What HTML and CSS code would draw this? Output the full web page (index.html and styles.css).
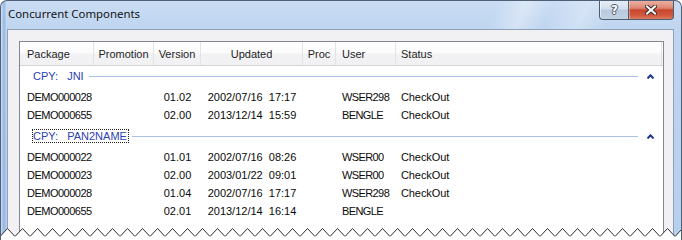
FILE: index.html
```html
<!DOCTYPE html>
<html>
<head>
<meta charset="utf-8">
<link rel="stylesheet" href="styles.css">
</head>
<body>
<div class="window">
  <div class="titlebar">
    <span class="title">Concurrent Components</span>
    <div class="caption">
      <div class="cbtn help"><span class="help-glyph">?</span></div>
      <div class="cbtn close">
        <svg class="x-glyph" width="12" height="10" viewBox="0 0 12 10">
          <path d="M2 1.5 L10 8.5 M10 1.5 L2 8.5" stroke="#3d2a28" stroke-width="4" stroke-linecap="square" fill="none"/>
          <path d="M2 1.5 L10 8.5 M10 1.5 L2 8.5" stroke="#ffffff" stroke-width="2" stroke-linecap="square" fill="none"/>
        </svg>
      </div>
    </div>
  </div>
  <div class="client">
    <div class="list">
      <div class="list-header">
        <div class="hcell left pad7">Package</div>
        <div class="hcell center">Promotion</div>
        <div class="hcell center">Version</div>
        <div class="hcell center">Updated</div>
        <div class="hcell center">Proc</div>
        <div class="hcell left pad6">User</div>
        <div class="hcell left pad5">Status</div>
      </div>

      <div class="group">
        <div class="group-header">
          <span class="group-title">CPY:  JNI</span>
          <span class="group-line"></span>
          <svg class="chevron" width="7" height="5" viewBox="0 0 7 5"><polyline points="0.5,4.5 3.5,1.3 6.5,4.5" fill="none" stroke="#1b3a8e" stroke-width="2"/></svg>
        </div>
        <div class="row">
          <div class="cell pkg">DEMO000028</div><div class="cell"></div><div class="cell center">01.02</div><div class="cell center">2002/07/16  17:17</div><div class="cell"></div><div class="cell user">WSER298</div><div class="cell status">CheckOut</div>
        </div>
        <div class="row">
          <div class="cell pkg">DEMO000655</div><div class="cell"></div><div class="cell center">02.00</div><div class="cell center">2013/12/14  15:59</div><div class="cell"></div><div class="cell user">BENGLE</div><div class="cell status">CheckOut</div>
        </div>
      </div>

      <div class="group second">
        <div class="group-header">
          <span class="group-title focused">CPY:  PAN2NAME</span>
          <span class="group-line"></span>
          <svg class="chevron" width="7" height="5" viewBox="0 0 7 5"><polyline points="0.5,4.5 3.5,1.3 6.5,4.5" fill="none" stroke="#1b3a8e" stroke-width="2"/></svg>
        </div>
        <div class="row">
          <div class="cell pkg">DEMO000022</div><div class="cell"></div><div class="cell center">01.01</div><div class="cell center">2002/07/16  08:26</div><div class="cell"></div><div class="cell user">WSER00</div><div class="cell status">CheckOut</div>
        </div>
        <div class="row">
          <div class="cell pkg">DEMO000023</div><div class="cell"></div><div class="cell center">02.00</div><div class="cell center">2003/01/22  09:01</div><div class="cell"></div><div class="cell user">WSER00</div><div class="cell status">CheckOut</div>
        </div>
        <div class="row">
          <div class="cell pkg">DEMO000028</div><div class="cell"></div><div class="cell center">01.04</div><div class="cell center">2002/07/16  17:17</div><div class="cell"></div><div class="cell user">WSER298</div><div class="cell status">CheckOut</div>
        </div>
        <div class="row">
          <div class="cell pkg">DEMO000655</div><div class="cell"></div><div class="cell center">02.01</div><div class="cell center">2013/12/14  16:14</div><div class="cell"></div><div class="cell user">BENGLE</div><div class="cell status"></div>
        </div>
      </div>
    </div>
  </div>

  <svg class="torn" width="682" height="16" viewBox="0 0 682 16">
    <defs>
      <pattern id="tooth" patternUnits="userSpaceOnUse" width="15" height="16">
        <path d="M0 12.5 L7.5 4.5 L15 12.5 L15 16 L0 16 Z" fill="#ffffff"/>
        <path d="M0 12.5 L7.5 4.5 L15 12.5" fill="none" stroke="#2b2b2b" stroke-width="1"/>
      </pattern>
    </defs>
    <rect x="0" y="0" width="682" height="16" fill="url(#tooth)"/>
  </svg>
</div>
</body>
</html>
```

FILE: styles.css
```css
* {
  box-sizing: border-box;
}

html, body {
  margin: 0;
  padding: 0;
  background: #ffffff;
}

body {
  font-family: "Liberation Sans", Arial, sans-serif;
  font-size: 11px;
  color: #000;
}

.window {
  position: relative;
  width: 682px;
  height: 240px;
  overflow: hidden;
  display: flex;
  flex-direction: column;
  border: 1px solid #4f6178;
  border-bottom: none;
  border-radius: 7px 7px 0 0;
  padding: 0 7px 0 6px;
  background:
    linear-gradient(90deg, rgba(255,255,255,0.35) 0, rgba(255,255,255,0) 1px, rgba(120,160,215,0.0) 1px, rgba(120,160,215,0.45) 2px, rgba(120,160,215,0.45) 4px, rgba(120,160,215,0) 5px),
    linear-gradient(180deg, #c9dcf3 0, #bfd5f0 28px, #b7cfee 100%);
}

.titlebar {
  height: 28px;
  display: flex;
  align-items: flex-start;
  margin: 0 -7px 0 -6px;
  padding: 0 7px 0 6px;
  background: linear-gradient(112deg, rgba(255,255,255,0) 72%, rgba(255,255,255,0.35) 76%, rgba(255,255,255,0) 80%, rgba(255,255,255,0.28) 85%, rgba(255,255,255,0) 89%);
}

.title {
  font-family: "Noto Sans", "Open Sans", sans-serif;
  font-size: 11.4px;
  line-height: 16px;
  padding-top: 5px;
  padding-left: 1px;
  color: #141414;
}

.caption {
  display: flex;
  margin-left: auto;
}

.cbtn {
  height: 19px;
  border: 1px solid #4e5c6e;
  border-top: none;
  display: flex;
  align-items: center;
  justify-content: center;
}

.help {
  width: 29px;
  border-right: none;
  border-radius: 0 0 0 4px;
  background: linear-gradient(180deg, #e6edf6 0, #d3dfee 45%, #b9c9dd 50%, #c3d3e6 100%);
  box-shadow: inset 1px 0 0 rgba(255,255,255,0.6);
}

.help-glyph {
  font-family: "DejaVu Sans", sans-serif;
  font-weight: bold;
  font-size: 12px;
  line-height: 12px;
  color: #ffffff;
  margin-left: 1px;
  text-shadow: 1px 0 0 #4a5666, -1px 0 0 #4a5666, 0 1px 0 #4a5666, 0 -1px 0 #4a5666;
}

.close {
  width: 46px;
  border-radius: 0 0 4px 0;
  background: linear-gradient(180deg, #eab0a2 0, #dc8570 40%, #c9462e 50%, #d1583f 80%, #dd7b62 100%);
  box-shadow: inset 1px 0 0 rgba(255,255,255,0.35);
}

.x-glyph {
  display: block;
  margin-top: -1px;
}

.client {
  flex: 1;
  display: flex;
  flex-direction: column;
  border: 1px solid #8fa1b7;
  border-bottom: none;
  background: #f1f0f3;
  padding: 11px 9px 0 11px;
}

.list {
  flex: 1;
  border: 1px solid #828790;
  border-bottom: none;
  background: #ffffff;
}

.list-header,
.row {
  display: grid;
  grid-template-columns: 74px 60px 47px 102px 33px 60px 266px;
}

.list-header {
  height: 24px;
  border-bottom: 1px solid #d5d5d5;
  background: linear-gradient(180deg, #ffffff 0, #fbfbfc 48%, #f2f2f4 52%, #f1f1f3 100%);
}

.hcell {
  border-right: 1px solid #e3e3e6;
  padding-top: 2px;
  line-height: 21px;
  color: #1e1e1e;
  white-space: pre;
  overflow: hidden;
}

.row {
  height: 18px;
}

.cell {
  line-height: 18px;
  white-space: pre;
  overflow: visible;
  color: #0a0a0a;
}

.cell.pkg {
  padding-left: 7px;
  letter-spacing: -0.5px;
}

.cell.user {
  padding-left: 6px;
  letter-spacing: -0.6px;
}

.cell.status {
  padding-left: 5px;
  letter-spacing: -0.1px;
}

.left { text-align: left; }
.center { text-align: center; }
.pad7 { padding-left: 7px; }
.pad6 { padding-left: 6px; }
.pad5 { padding-left: 5px; }

.group.second {
  margin-top: 2px;
}

.group-header {
  height: 22px;
  display: flex;
  align-items: center;
  padding: 0 9px 2px 12px;
}

.group-title {
  white-space: pre;
  word-spacing: 1.5px;
  color: #2d40b4;
  border: 1px dotted transparent;
  padding: 0 1px 0 0;
}

.group-title.focused {
  border-color: #222222;
}

.group-line {
  flex: 1;
  height: 1px;
  margin-left: 3px;
  background: #aac0e8;
}

.chevron {
  display: block;
  margin-left: 9px;
}

.torn {
  position: absolute;
  left: -1px;
  bottom: 0;
  display: block;
}
```
